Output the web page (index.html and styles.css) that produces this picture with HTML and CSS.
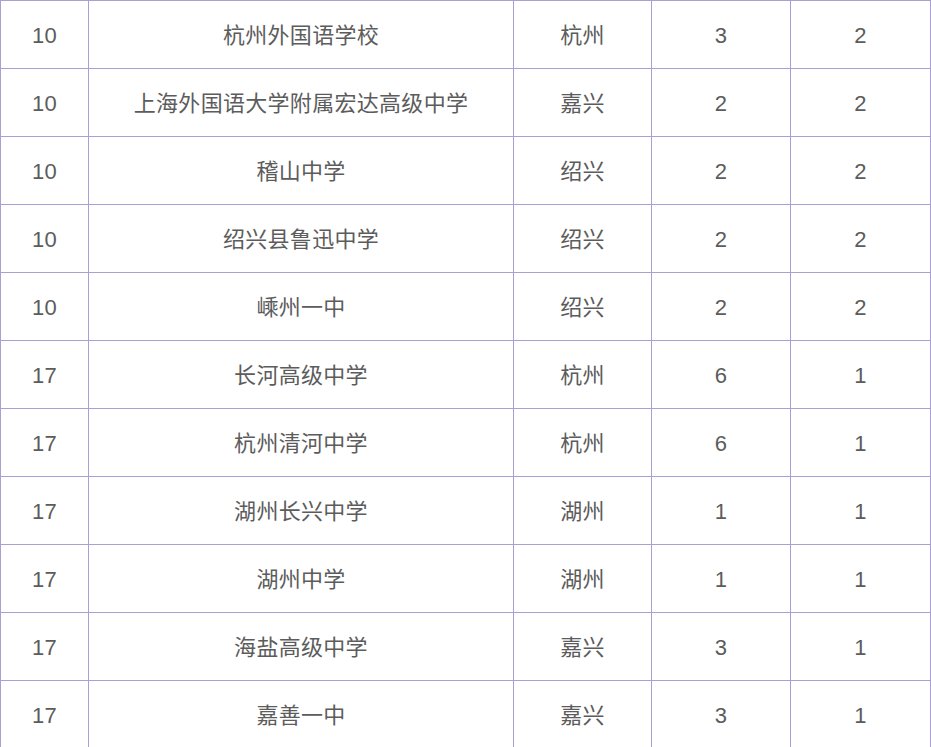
FILE: index.html
```html
<!DOCTYPE html>
<html lang="zh">
<head>
<meta charset="utf-8">
<title>学校排名</title>
<link rel="stylesheet" href="styles.css">
</head>
<body>
<div class="table">
  <div class="cell">10</div><div class="cell">杭州外国语学校</div><div class="cell">杭州</div><div class="cell">3</div><div class="cell">2</div>
  <div class="cell">10</div><div class="cell">上海外国语大学附属宏达高级中学</div><div class="cell">嘉兴</div><div class="cell">2</div><div class="cell">2</div>
  <div class="cell">10</div><div class="cell">稽山中学</div><div class="cell">绍兴</div><div class="cell">2</div><div class="cell">2</div>
  <div class="cell">10</div><div class="cell">绍兴县鲁迅中学</div><div class="cell">绍兴</div><div class="cell">2</div><div class="cell">2</div>
  <div class="cell">10</div><div class="cell">嵊州一中</div><div class="cell">绍兴</div><div class="cell">2</div><div class="cell">2</div>
  <div class="cell">17</div><div class="cell">长河高级中学</div><div class="cell">杭州</div><div class="cell">6</div><div class="cell">1</div>
  <div class="cell">17</div><div class="cell">杭州清河中学</div><div class="cell">杭州</div><div class="cell">6</div><div class="cell">1</div>
  <div class="cell">17</div><div class="cell">湖州长兴中学</div><div class="cell">湖州</div><div class="cell">1</div><div class="cell">1</div>
  <div class="cell">17</div><div class="cell">湖州中学</div><div class="cell">湖州</div><div class="cell">1</div><div class="cell">1</div>
  <div class="cell">17</div><div class="cell">海盐高级中学</div><div class="cell">嘉兴</div><div class="cell">3</div><div class="cell">1</div>
  <div class="cell">17</div><div class="cell">嘉善一中</div><div class="cell">嘉兴</div><div class="cell">3</div><div class="cell">1</div>
</div>
</body>
</html>
```
FILE: styles.css
```css
html, body {
  margin: 0;
  padding: 0;
  background: #ffffff;
}
body {
  font-family: "Liberation Sans", "Noto Sans CJK SC", sans-serif;
  color: #5c5c5c;
}
.table {
  display: grid;
  grid-template-columns: 88px 425px 138px 139px 140px;
  grid-auto-rows: 68px;
  width: 931px;
  box-sizing: border-box;
  border-top: 1px solid #a99fd3;
  border-left: 1px solid #a99fd3;
}
.cell {
  box-sizing: border-box;
  border-right: 1px solid #a99fd3;
  border-bottom: 1px solid #a99fd3;
  display: flex;
  align-items: center;
  justify-content: center;
  padding-top: 3px;
  font-size: 22px;
  letter-spacing: 0.3px;
  line-height: 1;
}
```
